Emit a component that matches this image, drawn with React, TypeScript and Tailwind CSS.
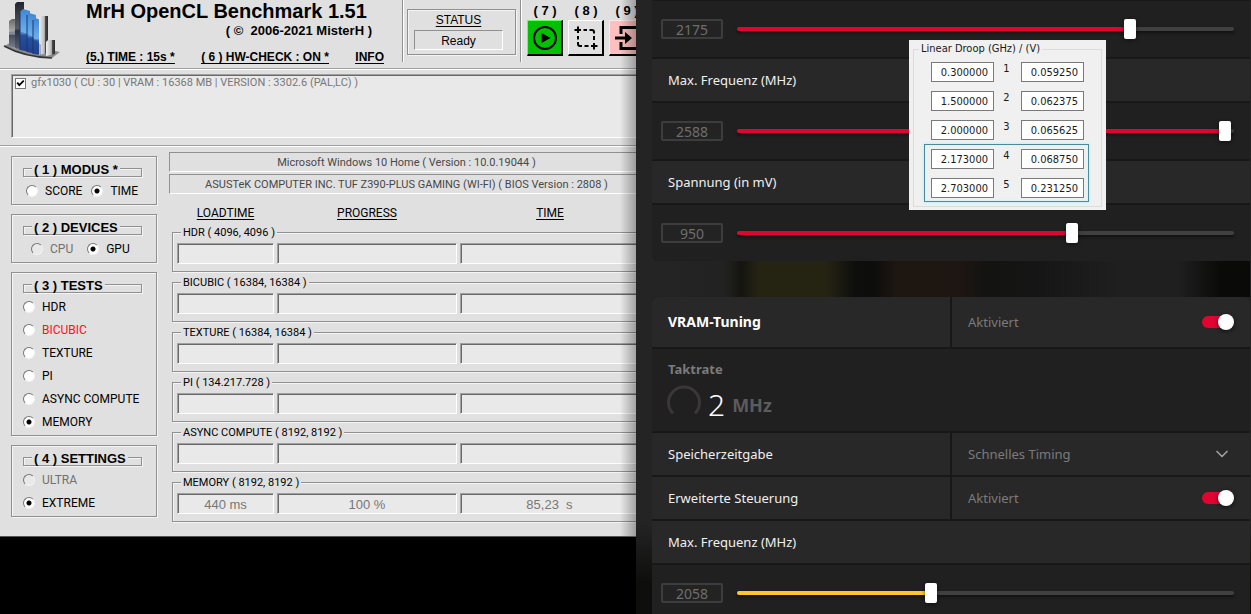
import React, { useState } from "react";
import { ChevronDown } from "lucide-react";

const etched = "border border-[#909090] shadow-[1px_1px_0_#f4f4f4,inset_1px_1px_0_#f4f4f4]";
const sunken =
  "border border-t-[#a0a0a0] border-l-[#a0a0a0] border-r-white border-b-white bg-[#e9e9e9] shadow-[inset_1px_1px_0_#696969]";

function Logo() {
  return (
    <svg viewBox="0 0 60 60" className="h-[60px] w-[60px]" aria-hidden="true">
      <defs>
        <linearGradient id="steel" x1="0" y1="0" x2="0" y2="1">
          <stop offset="0" stopColor="#6a6a6a" />
          <stop offset="0.5" stopColor="#b5b5b5" />
          <stop offset="0.55" stopColor="#5c5c5c" />
          <stop offset="1" stopColor="#a8a8a8" />
        </linearGradient>
        <linearGradient id="dark" x1="0" y1="0" x2="0" y2="1">
          <stop offset="0" stopColor="#20242c" />
          <stop offset="0.55" stopColor="#565b66" />
          <stop offset="0.6" stopColor="#2d333f" />
          <stop offset="1" stopColor="#74787f" />
        </linearGradient>
        <linearGradient id="blue" x1="0" y1="0" x2="0" y2="1">
          <stop offset="0" stopColor="#3f86d2" />
          <stop offset="0.55" stopColor="#6fb0ee" />
          <stop offset="0.62" stopColor="#2a5fb8" />
          <stop offset="1" stopColor="#2247a0" />
        </linearGradient>
        <linearGradient id="chrome" x1="0" y1="0" x2="1" y2="0">
          <stop offset="0" stopColor="#f2f2f2" />
          <stop offset="0.6" stopColor="#b8b8b8" />
          <stop offset="0.7" stopColor="#4a4a4a" />
          <stop offset="1" stopColor="#2c2c2c" />
        </linearGradient>
      </defs>
      <path d="M4 46 L12 42 L60 52 L52 58 Q24 57 4 46Z" fill="#8b8b8b" />
      <path d="M4 46 Q24 57 52 58" fill="none" stroke="#333" strokeWidth="1.5" />
      <path d="M9 21 L12 19 H16 V49 L9 46Z" fill="url(#steel)" />
      <path d="M15 4 L17 2 H24 V50 L15 48Z" fill="url(#dark)" />
      <path d="M20 12 L23 9 L30 11 V52 L20 50Z" fill="url(#blue)" />
      <path d="M27 15 L29 13 L36 15 V54 L27 52Z" fill="url(#blue)" />
      <path d="M33 20 L35 18 L41 20 V55 L33 54Z" fill="url(#blue)" />
      <path d="M20 12 V50 M27 15 V52 M33 20 V54" stroke="#173a78" strokeWidth="1" />
      <path d="M39 18 L42 16 H48 V53 L39 55Z" fill="url(#chrome)" />
      <path d="M46 42 L48 40 H55 V54 L46 56Z" fill="url(#chrome)" />
      <path d="M9 32 Q26 28 41 45 V55 L9 46Z" fill="#1d2f5c" opacity="0.3" />
    </svg>
  );
}

function RadioGroup({
  title,
  name,
  options,
  initial,
  disabled = [],
  accent,
  layout,
}: {
  title: string;
  name: string;
  options: string[];
  initial: string;
  disabled?: string[];
  accent?: string;
  layout: string;
}) {
  const [value, setValue] = useState(initial);
  return (
    <section className={`${etched} pt-[3px] pb-[2px]`}>
      <fieldset className={`${etched} mr-[14px] mb-[2px] ml-[11px] h-[17px] min-w-0 pl-2`}>
        <legend className="bg-[#e0e0e0] px-[2px] pt-[3px] font-['Liberation_Sans',Arial,sans-serif] text-[13px] leading-[13px] font-bold whitespace-pre">
          {title}
        </legend>
      </fieldset>
      <div className={layout}>
        {options.map((o) => (
          <label
            key={o}
            className={`flex h-[23px] items-center gap-[7px] ${
              disabled.includes(o) ? "text-[#707070]" : o === accent ? "text-[#ff1020]" : "text-black"
            }`}
          >
            <input
              type="radio"
              name={name}
              checked={value === o}
              disabled={disabled.includes(o)}
              onChange={() => setValue(o)}
              className="h-3 w-3 shrink-0 appearance-none rounded-full border border-t-[#777] border-l-[#777] border-r-[#f2f2f2] border-b-[#f2f2f2] bg-white checked:bg-[radial-gradient(circle,#000_2px,#fff_3px)] disabled:bg-[#e9e9e9]"
            />
            {o}
          </label>
        ))}
      </div>
    </section>
  );
}

const tests = [
  { name: "HDR ( 4096, 4096 )", cells: ["", "", ""] },
  { name: "BICUBIC ( 16384, 16384 )", cells: ["", "", ""] },
  { name: "TEXTURE ( 16384, 16384 )", cells: ["", "", ""] },
  { name: "PI ( 134.217.728 )", cells: ["", "", ""] },
  { name: "ASYNC COMPUTE ( 8192, 8192 )", cells: ["", "", ""] },
  { name: "MEMORY ( 8192, 8192 )", cells: ["440 ms", "100 %", "85,23  s"] },
];

function ToolButton({ label, title, tone, children }: { label: string; title: string; tone: string; children: React.ReactNode }) {
  return (
    <div className="flex w-9 shrink-0 flex-col items-center">
      <span className="h-5 text-[13px] leading-[21px] font-bold whitespace-pre">{label}</span>
      <button
        aria-label={title}
        className={`flex h-9 w-9 items-center justify-center border-2 border-t border-l border-r-black border-b-black ${tone}`}
      >
        {children}
      </button>
    </div>
  );
}

function Benchmark() {
  return (
    <div className="relative overflow-hidden border-b border-[#555] bg-[#e0e0e0] font-[Roboto,'Liberation_Sans',sans-serif] text-[12px] leading-4 text-black">
      <header className="flex h-[69px] border-b border-[#a0a0a0] font-['Liberation_Sans',Arial,sans-serif] shadow-[0_1px_0_#fff]">
        <div className="w-[86px] shrink-0">
          <Logo />
        </div>
        <div className="flex w-[298px] shrink-0 flex-col font-bold">
          <h1 className="h-[23px] text-[20px] leading-[23px] whitespace-nowrap">MrH OpenCL Benchmark 1.51</h1>
          <p className="pr-3 text-right text-[13px] leading-4 whitespace-pre">( ©  2006-2021 MisterH )</p>
          <nav className="mt-[10px] flex justify-between text-[12px] leading-4 underline underline-offset-2">
            <a href="#time">(5.) TIME : 15s *</a>
            <a href="#hw">( 6 ) HW-CHECK : ON *</a>
            <a href="#info">INFO</a>
          </nav>
        </div>
        <div className="ml-[18px] h-[62px] w-[119px] shrink-0 border-x border-[#909090] px-1 pt-[9px] shadow-[1px_0_0_#fff,inset_1px_0_0_#fff]">
          <div className={`${etched} flex h-[46px] flex-col pt-px pr-3 pl-[6px] text-center text-[12px]`}>
            <span className="leading-[19px] underline underline-offset-2">STATUS</span>
            <output className="h-5 border border-t-[#909090] border-l-[#909090] border-r-white border-b-white leading-[21px]">
              Ready
            </output>
          </div>
        </div>
        <div className="ml-[6px] flex gap-[5px]">
          <ToolButton label="( 7 )" title="Start" tone="bg-[#00c000] border-t-[#60ff60] border-l-[#60ff60]">
            <svg viewBox="0 0 26 26" className="h-[26px] w-[26px]" aria-hidden="true">
              <circle cx="13" cy="13" r="11" fill="none" stroke="#000" strokeWidth="2" />
              <path d="M9.500 8 L18.500 13 L9.500 18Z" />
            </svg>
          </ToolButton>
          <ToolButton label="( 8 )" title="Capture region" tone="bg-[#e0e0e0] border-t-white border-l-white">
            <svg viewBox="0 0 26 26" className="h-[26px] w-[26px]" fill="none" stroke="#000" strokeWidth="2" aria-hidden="true">
              <path d="M5 1.500V8M1.500 5H8" />
              <path d="M21 18v6.500M18 21h6.500" />
              <path d="M10.500 5h3.500M16.500 5h2.500q2 0 2 2v1.500M21 11v4" />
              <path d="M5 11v3.500M5 17v2q0 2 2 2h2M11.500 21h4" />
            </svg>
          </ToolButton>
          <ToolButton label="( 9 )" title="Exit" tone="bg-[#ffc0c0] border-t-[#ffe8e8] border-l-[#ffe8e8]">
            <svg viewBox="0 0 26 26" className="h-[26px] w-[26px]" fill="none" stroke="#000" strokeWidth="3" aria-hidden="true">
              <path d="M7 9V2.500h18v21H7v-6.500" />
              <path d="M1 13h12" />
              <path d="M11 7l7 6l-7 6Z" fill="#000" stroke="none" />
            </svg>
          </ToolButton>
        </div>
      </header>

      <div className="border-b border-[#a0a0a0] pt-[5px] pb-[7px] pl-[11px] shadow-[0_1px_0_#fff]">
        <div className={`${sunken} -mr-2 h-16 pl-[3px]`}>
          <label className="flex items-center gap-[5px] text-[11px] text-[#777]">
            <input type="checkbox" defaultChecked className="peer sr-only" />
            <svg
              viewBox="0 0 11 11"
              className="h-[11px] w-[11px] border border-[#777] bg-white text-transparent peer-checked:text-black"
              aria-hidden="true"
            >
              <path d="M1.500 4.500L4 7.500L9.500 2" fill="none" stroke="currentColor" strokeWidth="2.200" />
            </svg>
            gfx1030 ( CU : 30 | VRAM : 16368 MB | VERSION : 3302.6 (PAL,LC) )
          </label>
        </div>
      </div>

      <div className="flex gap-3 pb-[14px] pl-[11px]">
        <div className="flex w-[146px] shrink-0 flex-col gap-[9px] pt-[10px]">
          <RadioGroup title="( 1 ) MODUS *" name="mode" options={["SCORE", "TIME"]} initial="TIME" layout="flex gap-[9px] pl-[14px]" />
          <RadioGroup
            title="( 2 ) DEVICES"
            name="device"
            options={["CPU", "GPU"]}
            initial="GPU"
            disabled={["CPU"]}
            layout="flex gap-[14px] pl-[19px]"
          />
          <RadioGroup
            title="( 3 ) TESTS"
            name="test"
            options={["HDR", "BICUBIC", "TEXTURE", "PI", "ASYNC COMPUTE", "MEMORY"]}
            initial="MEMORY"
            accent="BICUBIC"
            layout="pl-[11px]"
          />
          <RadioGroup
            title="( 4 ) SETTINGS"
            name="settings"
            options={["ULTRA", "EXTREME"]}
            initial="EXTREME"
            disabled={["ULTRA"]}
            layout="pl-[11px]"
          />
        </div>

        <div className="-mr-2 min-w-0 flex-1 pt-[6px]">
          <div className="flex flex-col gap-[2px] text-center text-[11px] text-[#484848]">
            <p className="h-5 truncate border border-t-[#909090] border-r-white border-b-white border-l-[#909090] leading-5">
              Microsoft Windows 10 Home ( Version : 10.0.19044 )
            </p>
            <p className="h-5 truncate border border-t-[#909090] border-r-white border-b-white border-l-[#909090] leading-5">
              ASUSTeK COMPUTER INC. TUF Z390-PLUS GAMING (WI-FI) ( BIOS Version : 2808 )
            </p>
          </div>
          <div className="mt-[11px] grid grid-cols-[97px_180px_1fr] gap-[3px] pr-1 pl-2 text-center underline underline-offset-2">
            <span>LOADTIME</span>
            <span>PROGRESS</span>
            <span>TIME</span>
          </div>
          <div className="mt-1 flex flex-col gap-[3px] pl-[3px]">
            {tests.map((t) => (
              <fieldset key={t.name} className={`${etched} h-[47px] min-w-0 px-1 pt-[3px]`}>
                <legend className="ml-1 bg-[#e0e0e0] px-[2px] pt-px text-[11px] leading-[14px]">{t.name}</legend>
                <div className="grid grid-cols-[97px_180px_1fr] gap-[3px]">
                  {t.cells.map((c, i) => (
                    <output
                      key={i}
                      className={`${sunken} h-[21px] text-center font-['Liberation_Sans',Arial,sans-serif] text-[13px] leading-[21px] whitespace-pre text-[#777]`}
                    >
                      {c}
                    </output>
                  ))}
                </div>
              </fieldset>
            ))}
          </div>
        </div>
      </div>
      <div className="pointer-events-none absolute inset-y-0 right-0 w-4 bg-linear-to-r from-transparent to-black/30" />
    </div>
  );
}

function SliderRow({ label, min, max, initial, color }: { label: string; min: number; max: number; initial: number; color: string }) {
  const [value, setValue] = useState(initial);
  const pct = ((value - min) / (max - min)) * 100;
  return (
    <div className="flex h-14 shrink-0 items-center gap-[14px] bg-[#202020] pr-4 pl-[9px]">
      <input
        type="text"
        aria-label={`${label} Wert`}
        value={value}
        onChange={(e) => setValue(Number(e.target.value) || min)}
        className="h-5 w-[62px] rounded-xs border-2 border-[#3d3d3d] bg-[#232323] text-center text-[14px] leading-4 text-[#6e6e6e]"
      />
      <input
        type="range"
        aria-label={label}
        min={min}
        max={max}
        value={value}
        onChange={(e) => setValue(Number(e.target.value))}
        style={{ backgroundImage: `linear-gradient(to right, ${color} ${pct}%, #404040 ${pct}%)` }}
        className="h-1 min-w-0 flex-1 appearance-none rounded-full shadow-[0_2px_3px_#111] [&::-webkit-slider-thumb]:h-5 [&::-webkit-slider-thumb]:w-3 [&::-webkit-slider-thumb]:appearance-none [&::-webkit-slider-thumb]:rounded-xs [&::-webkit-slider-thumb]:bg-white [&::-webkit-slider-thumb]:shadow-[0_1px_4px_#0008]"
      />
    </div>
  );
}

function LabelRow({ children }: { children: React.ReactNode }) {
  return <div className="flex h-[42px] shrink-0 items-center bg-[#282828] px-4 text-[#f0f0f0]">{children}</div>;
}

function Toggle({ label }: { label: string }) {
  return (
    <label className="flex flex-1 items-center justify-between">
      {label}
      <input
        type="checkbox"
        role="switch"
        defaultChecked
        className="relative h-3 w-8 appearance-none rounded-full bg-[#555] before:absolute before:-top-[2px] before:left-0 before:h-4 before:w-4 before:rounded-full before:bg-white before:shadow-[0_1px_4px_#000a] checked:bg-[#e00531] checked:before:left-4"
      />
    </label>
  );
}

function SplitRow({ label, tall, children }: { label: string; tall?: boolean; children: React.ReactNode }) {
  return (
    <div className={`grid shrink-0 grid-cols-2 gap-[2px] ${tall ? "h-[50px]" : "h-[42px]"}`}>
      <div className={`flex items-center bg-[#282828] pl-4 ${tall ? "text-[14px] font-bold text-white" : "text-[#f0f0f0]"}`}>
        {label}
      </div>
      <div className="flex items-center bg-[#282828] pr-4 pl-4 text-[#7b7b7b]">{children}</div>
    </div>
  );
}

const droop = [
  ["0.300000", "0.059250"],
  ["1.500000", "0.062375"],
  ["2.000000", "0.065625"],
  ["2.173000", "0.068750"],
  ["2.703000", "0.231250"],
];

function DroopRow({ index }: { index: number }) {
  const box = "h-5 w-[63px] border border-[#7a7a7a] bg-white pr-[5px] text-right leading-[18px]";
  return (
    <div className="flex justify-between">
      <input aria-label={`GHz ${index + 1}`} defaultValue={droop[index][0]} className={box} />
      <span className="pr-[2px] leading-[14px]">{index + 1}</span>
      <input aria-label={`V ${index + 1}`} defaultValue={droop[index][1]} className={box} />
    </div>
  );
}

function DroopPanel() {
  return (
    <div className="absolute top-10 right-[145px] w-[197px] bg-[#f0f0f0] px-1 pt-[2px] pb-[3px] font-['DejaVu_Sans_Condensed','DejaVu_Sans',sans-serif] text-[11px] text-[#1a1a1a]">
      <fieldset className="min-w-0 border border-[#dcdcdc] pr-3 pb-1 pl-[10px]">
        <legend className="-ml-[5px] bg-[#f0f0f0] px-[2px] leading-[14px] whitespace-nowrap">Linear Droop (GHz) / (V)</legend>
        <div className="flex flex-col gap-[9px] pt-[6px] pr-[5px] pb-1 pl-[7px]">
          <DroopRow index={0} />
          <DroopRow index={1} />
          <DroopRow index={2} />
        </div>
        <div className="flex flex-col gap-[9px] border border-[#4a8a9a] pt-1 pr-1 pb-[3px] pl-[6px] shadow-[0_0_3px_#a0f0ff,inset_0_0_3px_#c0f6ff]">
          <DroopRow index={3} />
          <DroopRow index={4} />
        </div>
      </fieldset>
    </div>
  );
}

function Tuning() {
  return (
    <div className="relative flex min-w-0 flex-col overflow-hidden bg-linear-to-b from-[#242424] from-85% to-[#0e0e0d] to-95% pr-px pl-4 font-['Noto_Sans','Open_Sans',sans-serif] text-[13px] leading-5">
      <section className="flex shrink-0 flex-col gap-[2px] overflow-hidden rounded-b-md bg-[#181818] pt-px">
        <SliderRow label="Min. Frequenz (MHz)" min={500} max={2600} initial={2175} color="#e00531" />
        <LabelRow>Max. Frequenz (MHz)</LabelRow>
        <SliderRow label="Max. Frequenz (MHz)" min={500} max={2600} initial={2588} color="#e00531" />
        <LabelRow>Spannung (in mV)</LabelRow>
        <SliderRow label="Spannung (in mV)" min={740} max={1050} initial={950} color="#e00531" />
      </section>
      <div className="h-9 shrink-0 bg-[linear-gradient(to_right,#242424_0%,#222_12%,#15150f_15%,#252413_18%,#252413_29%,#0e0e0d_34%,#0d0d0d_37%,#1e1611_41%,#1e1612_51%,#131312_56%,#151515_64%,#1f1f1f_78%,#1f1f1f_88%,#0a0a09_95%)]" />
      <section className="flex shrink-0 flex-col gap-[2px] overflow-hidden rounded-t-md bg-[#181818]">
        <SplitRow label="VRAM-Tuning" tall>
          <Toggle label="Aktiviert" />
        </SplitRow>
        <div className="h-[82px] bg-[#202020] px-4 pt-[10px]">
          <h2 className="font-bold text-[#7b7b7b]">Taktrate</h2>
          <div className="flex items-center">
            <svg viewBox="0 0 34 34" className="mt-[2px] -ml-px h-[34px] w-[34px]" aria-hidden="true">
              <path d="M6 28.500A15.500 15.500 0 1 1 28 28.500" fill="none" stroke="#3b3637" strokeWidth="3" />
            </svg>
            <p className="ml-[7px] flex items-center gap-[7px] pt-2">
              <span className="text-[30px] leading-9 font-light text-white">2</span>
              <span className="text-[18px] leading-9 font-bold text-[#5c5c5c]">MHz</span>
            </p>
          </div>
        </div>
        <SplitRow label="Speicherzeitgabe">
          <select aria-label="Speicherzeitgabe" className="min-w-0 flex-1 appearance-none bg-transparent">
            <option>Schnelles Timing</option>
          </select>
          <ChevronDown size={20} strokeWidth={2} className="mr-[2px] text-[#a0a0a0]" />
        </SplitRow>
        <SplitRow label="Erweiterte Steuerung">
          <Toggle label="Aktiviert" />
        </SplitRow>
        <LabelRow>Max. Frequenz (MHz)</LabelRow>
        <SliderRow label="Speicherfrequenz (MHz)" min={2000} max={2150} initial={2058} color="#ffc629" />
      </section>
      <DroopPanel />
    </div>
  );
}

export default function App() {
  return (
    <main className="grid h-screen grid-cols-[636fr_615fr] overflow-hidden bg-black">
      <div className="min-w-0">
        <Benchmark />
      </div>
      <Tuning />
    </main>
  );
}
